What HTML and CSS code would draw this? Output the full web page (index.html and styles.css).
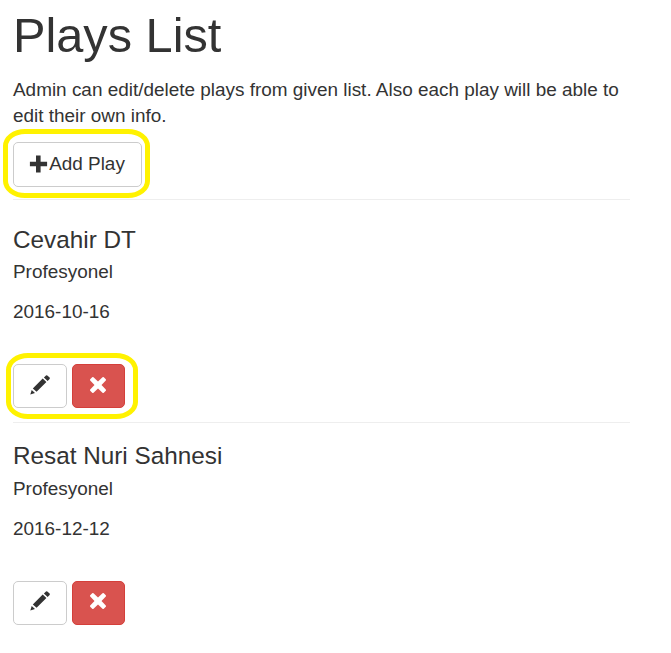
FILE: index.html
```html
<!DOCTYPE html>
<html lang="en">
<head>
<meta charset="utf-8">
<title>Plays List</title>
<link rel="stylesheet" href="styles.css">
</head>
<body>
<svg class="defs" width="0" height="0">
  <symbol id="plus" viewBox="0 0 18 18"><path d="M6.500.6h4.600v6.100h6.500v4.600h-6.500v6.100H6.500v-6.100H.4V6.700h6.100z"/></symbol>
  <symbol id="pencil" viewBox="0 0 20 20"><path d="M.3 19.500L1.700 15 5 18zM2.800 13.500L12.700 3.500l3.700 3.500-9.800 9.800zM13.900 2.400L16 .4q.7-.5 1.300 0l2.300 2.200q.5.700 0 1.300l-2 2z"/></symbol>
  <symbol id="remove" viewBox="0 0 18 18"><path d="M4.500 1.200L9 5.500l4.500-4.300q.7-.5 1.300 0l2 2q.5.700 0 1.300L12.500 9l4.300 4.500q.5.700 0 1.300l-2 2q-.7.500-1.300 0L9 12.500l-4.500 4.300q-.7.500-1.300 0l-2-2q-.5-.7 0-1.300L5.500 9 1.200 4.500q-.5-.7 0-1.300l2-2q.7-.5 1.300 0z"/></symbol>
</svg>
<main class="page">
  <h1>Plays List</h1>
  <p class="intro">Admin can edit/delete plays from given list. Also each play will be able to edit their own info.</p>
  <div class="mark mark-add"><button class="btn add"><svg class="icon"><use href="#plus"/></svg>Add Play</button></div>
  <section class="play">
    <h2>Cevahir DT</h2>
    <p class="kind">Profesyonel</p>
    <p class="date">2016-10-16</p>
    <div class="actions mark mark-actions">
      <button class="btn square" aria-label="Edit"><svg class="icon pencil"><use href="#pencil"/></svg></button>
      <button class="btn square danger" aria-label="Delete"><svg class="icon"><use href="#remove"/></svg></button>
    </div>
  </section>
  <section class="play second">
    <h2>Resat Nuri Sahnesi</h2>
    <p class="kind">Profesyonel</p>
    <p class="date">2016-12-12</p>
    <div class="actions">
      <button class="btn square" aria-label="Edit"><svg class="icon pencil"><use href="#pencil"/></svg></button>
      <button class="btn square danger" aria-label="Delete"><svg class="icon"><use href="#remove"/></svg></button>
    </div>
  </section>
</main>
</body>
</html>
```
FILE: styles.css
```css
* { box-sizing: border-box; }
body { margin: 0; background: #fff; color: #333; font: 18.93px/26px "Liberation Sans", Arial, sans-serif; }
.defs { position: absolute; }
.page { width: 617px; margin-left: 13px; padding-top: 8px; }
h1, h2, p { margin: 0; font-weight: 400; }
h1 { font-size: 48.7px; line-height: 54px; }
.intro { margin-top: 15px; height: 52px; }
.mark { position: relative; width: max-content; }
.mark::after { content: ""; position: absolute; border: 5px solid #fff200; border-radius: 22px / 17px; pointer-events: none; }
.mark-add { margin-top: 13px; }
.mark-add::after { inset: -13px -8px -11px -10px; }
.mark-actions::after { inset: -11px -13px -11px -7px; }
.btn { display: flex; align-items: center; justify-content: center; height: 44px; padding: 0 1px 3px 0; border: 1px solid #ccc; border-radius: 5px; background: #fff; color: #333; font: inherit; }
.add { width: 129px; height: 45px; padding-bottom: 1px; }
.icon { width: 18px; height: 18px; fill: currentColor; }
.add .icon { width: 19px; margin: 0 1px 1px 0; }
.pencil { width: 20px; height: 20px; }
.play { height: 223px; margin-top: 12px; padding-top: 26px; border-top: 1px solid #eee; }
.second { margin-top: 0; padding-top: 19px; }
h2 { font-size: 24.3px; line-height: 28px; }
.kind { margin-top: 5px; }
.second .kind { margin-top: 6px; }
.date { margin-top: 14px; }
.actions { display: flex; gap: 5px; margin-top: 39px; }
.square { width: 54px; }
.second .square { padding-bottom: 5px; }
.danger { width: 53px; border-color: #d43f3a; background: #d9534f; color: #fff; }
```
